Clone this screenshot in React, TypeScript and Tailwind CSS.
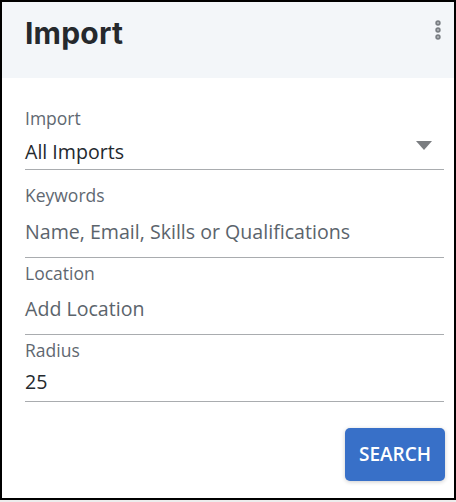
import { MoreVertical } from "lucide-react"

const body = { fontFamily: '"Open Sans", "Liberation Sans", sans-serif' }

export default function App() {
  return (
    <div className="w-[456px] h-[502px] bg-[#ededed]" style={body}>
      <div className="w-[456px] h-[500px] border-2 border-black bg-white flex flex-col">
        <div className="h-[76px] bg-[#f3f6f9] flex items-start justify-between pl-[23px] pr-[4px]">
          <h1
            className="text-[30px] leading-[36px] pt-[13px] font-bold text-[#25292d] tracking-[0.2px]"
            style={{ fontFamily: 'Inter, "Liberation Sans", sans-serif' }}
          >
            Import
          </h1>
          <MoreVertical className="w-6 h-6 mt-[16px] text-[#7a7f84]" strokeWidth={3.4} />
        </div>
        <div className="flex flex-col pl-[23px] pr-[10px] pt-[28px]">
          {/* import select */}
          <div className="border-b-[1.5px] border-[#a9acaf] pb-[4px]">
            <div className="text-[17.5px] leading-[24px] text-[#5f6871]">Import</div>
            <div className="flex items-center justify-between pt-[8px]">
              <span className="text-[19.6px] leading-[27px] text-[#24292e]">All Imports</span>
              <svg width="16" height="9" viewBox="0 0 16 9" className="mr-[12px] -mt-[12px]">
                <path d="M0 0 H16 L8 9 Z" fill="#7a7d80" />
              </svg>
            </div>
          </div>
          {/* keywords */}
          <div className="border-b-[1.5px] border-[#a9acaf] pt-[13px] pb-[12px]">
            <div className="text-[17.5px] leading-[24px] text-[#5f6871]">Keywords</div>
            <div className="text-[19.6px] leading-[27px] pt-[11px] text-[#5b646c]">
              Name, Email, Skills or Qualifications
            </div>
          </div>
          {/* location */}
          <div className="border-b-[1.5px] border-[#a9acaf] pt-[3px] pb-[12px]">
            <div className="text-[17.5px] leading-[24px] text-[#5f6871]">Location</div>
            <div className="text-[19.6px] leading-[27px] pt-[10px] text-[#5b646c]">Add Location</div>
          </div>
          {/* radius */}
          <div className="border-b-[1.5px] border-[#a9acaf] pt-[3px] pb-[6px]">
            <div className="text-[17.5px] leading-[24px] text-[#5f6871]">Radius</div>
            <div className="text-[19.6px] leading-[27px] pt-[6px] text-[#24292e]">25</div>
          </div>
          <div className="flex justify-end pt-[26px] -mr-[1px]">
            <button className="w-[100px] h-[53px] rounded-[5px] bg-[#3870c8] text-white text-[19px] font-semibold shadow-[0_1px_4px_rgba(0,0,0,0.2)]">
              SEARCH
            </button>
          </div>
        </div>
      </div>
    </div>
  )
}
